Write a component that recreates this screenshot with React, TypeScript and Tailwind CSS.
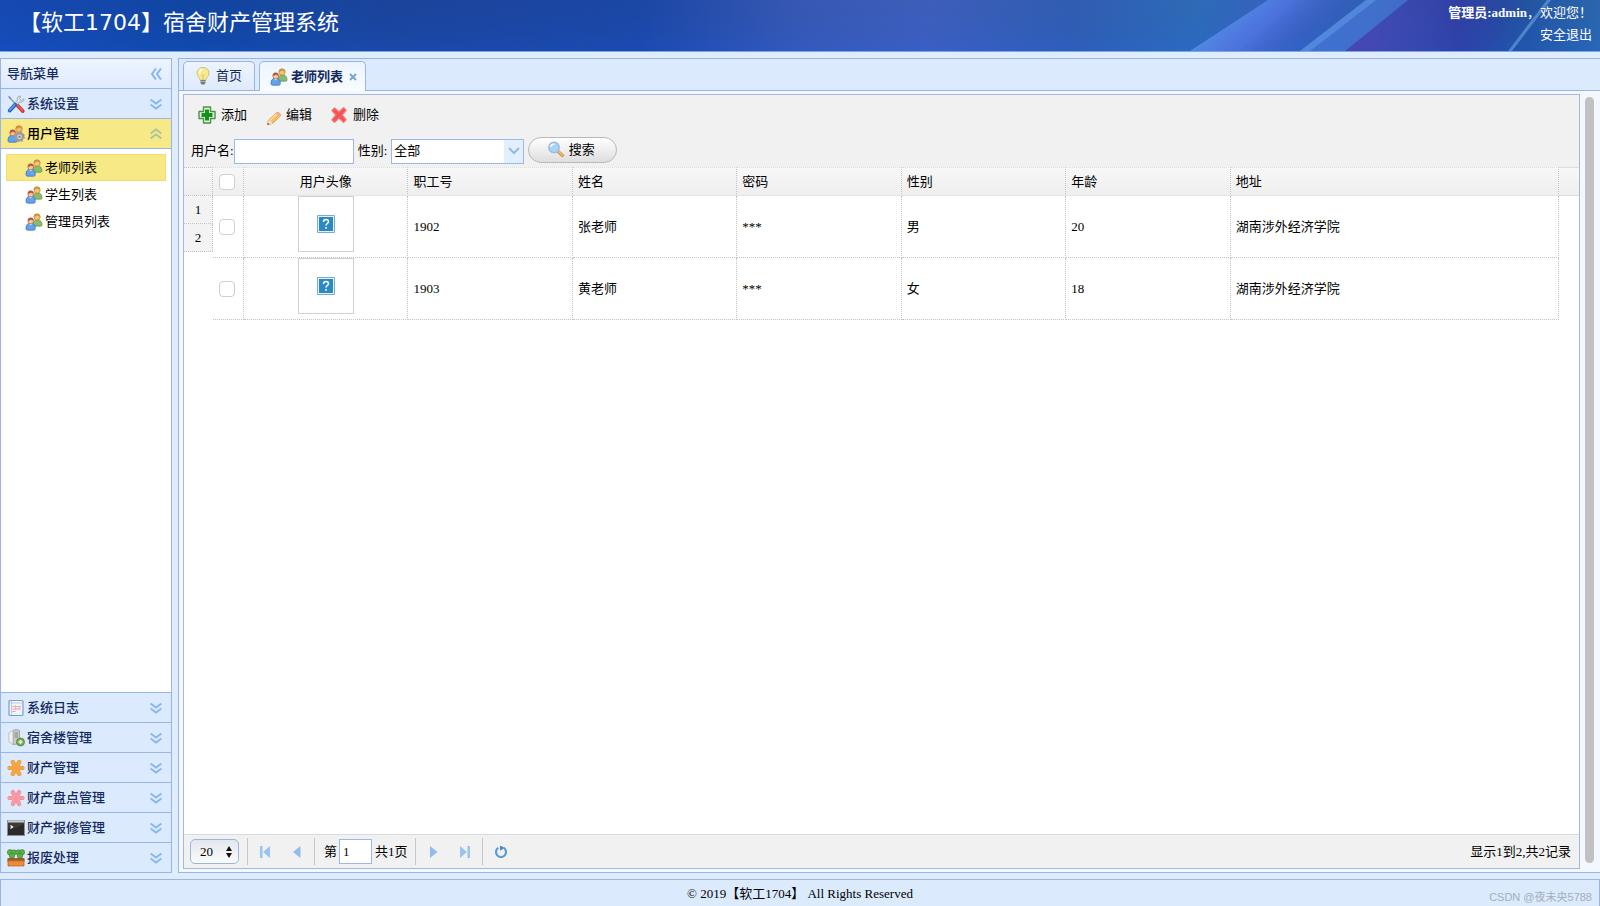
import type { ReactNode } from 'react';

const users = [
  { id: '1902', name: '张老师', gender: '男', age: 20, address: '湖南涉外经济学院' },
  { id: '1903', name: '黄老师', gender: '女', age: 18, address: '湖南涉外经济学院' },
];

function Svg({ children, className = 'size-[18px] shrink-0' }: { children: ReactNode; className?: string }) {
  return (
    <svg viewBox="0 0 18 18" className={className} fill="none" aria-hidden="true">
      {children}
    </svg>
  );
}

function UsersIcon() {
  return (
    <Svg>
      <path d="M8 12.500c0-4 1.500-5.500 4.500-5.500s4.500 1.500 4.500 5c0 .8-.4 1.200-1.200 1.200H9z" fill="#86bd6c" stroke="#5d964a" strokeWidth=".7" />
      <circle cx="12" cy="4" r="3.200" fill="#f3c578" stroke="#b98330" strokeWidth=".7" />
      <path d="M8.900 3.800c.2-2.200 1.500-3 3.100-3s3 1 3.100 3c-1.400-.2-2-.8-2.600-1.500-.8.900-2 1.400-3.600 1.500z" fill="#c8923c" />
      <path d="M1 15.500c0-3.800 1.700-5.300 4.600-5.300s4.700 1.500 4.700 5.300c0 1.200-.8 1.700-1.600 1.700H2.600c-1 0-1.600-.5-1.600-1.700z" fill="#63a3ee" stroke="#2f68bd" strokeWidth=".7" />
      <path d="M4 10.600l1.700 2 1.700-2z" fill="#e5f1ff" />
      <circle cx="5.700" cy="8" r="2.900" fill="#f6c7a0" stroke="#a65b38" strokeWidth=".6" />
      <path d="M2.800 7.800c0-2.300 1.200-3.200 2.900-3.200s3 1 2.900 3.200C7.300 7.600 6.600 7.200 6 6.500c-.7.800-1.800 1.200-3.200 1.300z" fill="#b15a3e" />
    </Svg>
  );
}

function UserGearIcon() {
  return (
    <Svg>
      <path d="M8 12c0-3.500 1.500-5 4.500-5s4.500 1.500 4.500 5z" fill="#d8a955" />
      <circle cx="12" cy="4" r="3.300" fill="#f5bd69" stroke="#c47e26" strokeWidth=".7" />
      <path d="M8.800 3.800c.2-2.200 1.500-3 3.200-3s3 1 3.200 3c-1.400-.2-2-.8-2.600-1.500-.8.900-2 1.400-3.800 1.500z" fill="#dc8b29" />
      <path d="M1 15.500c0-3.800 1.700-5.300 4.600-5.300s4.700 1.500 4.700 5.300c0 1.200-.8 1.700-1.600 1.700H2.600c-1 0-1.600-.5-1.600-1.700z" fill="#63a3ee" stroke="#2f68bd" strokeWidth=".7" />
      <circle cx="5.700" cy="8" r="2.900" fill="#f3bd91" stroke="#a65b38" strokeWidth=".6" />
      <path d="M2.800 7.800c0-2.300 1.200-3.200 2.900-3.200s3 1 2.900 3.200C7.300 7.600 6.600 7.200 6 6.500c-.7.800-1.800 1.200-3.200 1.300z" fill="#b15a3e" />
      <circle cx="12.500" cy="11.800" r="3.400" fill="#e5e5e2" stroke="#9c9c9a" strokeWidth="2.400" />
      <circle cx="12.500" cy="11.800" r="4.800" stroke="#9c9c9a" strokeWidth="1.400" strokeDasharray="1.880 1.890" />
      <circle cx="12.500" cy="11.800" r="1.300" fill="#888" />
    </Svg>
  );
}

function ToolsIcon() {
  return (
    <Svg>
      <path d="M2 2l8.500 9" stroke="#8da0b5" strokeWidth="1.500" />
      <path d="M1 .7l2.600 1.200.6 2-1.500.2z" fill="#7d8ea5" />
      <path d="M10.500 10.500l5.200 5.500" stroke="#c93a38" strokeWidth="3.800" strokeLinecap="round" />
      <path d="M10.800 10.500l4.600 5" stroke="#ef6358" strokeWidth="1.500" strokeLinecap="round" />
      <path d="M16.900 3.800l-2.500 1.700-1.800-1.500.9-3C10.800.8 9.500 3 10.400 5.300L7.200 8.800l2.200 2L12.600 7c2.500.7 4.700-.7 4.300-3.200z" fill="#dce2e8" stroke="#8996a4" strokeWidth=".7" />
      <path d="M8.200 9.700L2.800 15.500" stroke="#2f62ba" strokeWidth="3.900" strokeLinecap="round" />
      <path d="M7.500 9.900L2.800 15" stroke="#68a1e8" strokeWidth="1.500" strokeLinecap="round" />
    </Svg>
  );
}

function LogIcon() {
  return (
    <Svg>
      <rect x="2" y="1.500" width="14" height="15" rx="1" fill="#eff5fd" stroke="#7d9dcc" strokeWidth="1.200" />
      <path d="M4.500 2v14M3 4h12" stroke="#b8cce8" />
      <path d="M5.500 7.500h2.300M9.500 7.500H14M5.500 10h8M5.500 12.500h3" stroke="#ed9a9a" strokeWidth="1.200" />
      <path d="M8.500 6v5M12.500 7v4" stroke="#f2b4ae" />
    </Svg>
  );
}

function ServerIcon() {
  return (
    <Svg>
      <path d="M6 1.500c2-1 5-1 6.500 0v12c-2 1.500-4.500 2-6.500 2z" fill="#c8cac9" stroke="#949897" strokeWidth=".8" />
      <path d="M6 1.500L1.800 4v8.500L6 15.500z" fill="#f0f1ef" stroke="#b4b8b6" strokeWidth=".8" />
      <path d="M7.500 4h3.500M7.500 6h3.500M7.500 8h3.500" stroke="#818683" />
      <circle cx="13.500" cy="13" r="4" fill="#79ad54" stroke="#4f8139" strokeWidth=".8" />
      <path d="M11.500 13h4M13.500 11v4" stroke="#e9f7d6" strokeWidth="1.600" />
    </Svg>
  );
}

function GearIcon({ pink = false }: { pink?: boolean }) {
  const fill = pink ? '#fa9aa2' : '#f9a63e';
  const edge = pink ? '#f08791' : '#e8903a';
  return (
    <Svg>
      <g stroke={edge} strokeWidth="4.200" strokeLinecap="round">
        <path d="M2.500 9h13M5.800 3l6.400 12M12.200 3L5.800 15" />
      </g>
      <g stroke={fill} strokeWidth="3.200" strokeLinecap="round">
        <path d="M2.500 9h13M5.800 3l6.400 12M12.200 3L5.800 15" />
      </g>
      <circle cx="9" cy="9" r="4" fill={fill} />
    </Svg>
  );
}

function TerminalIcon() {
  return (
    <Svg>
      <rect x=".5" y="1.500" width="17" height="15" fill="#3a3a3a" stroke="#8d918f" />
      <path d="M1 2.500h16" stroke="#c9cdd0" strokeWidth="2" />
      <path d="M1 16V9c6 1 11-1 16-4v11z" fill="#2a2a2a" />
      <path d="M3.500 6.500l2 1.500-2 1.500" stroke="#fff" strokeWidth="1.300" />
    </Svg>
  );
}

function PlantIcon() {
  return (
    <Svg>
      <path d="M5 4v6M12.500 4v6" stroke="#3f8230" strokeWidth="1.500" />
      <g fill="#5faf48" stroke="#37812b" strokeWidth=".6">
        <circle cx="3" cy="3.300" r="2.700" />
        <circle cx="7" cy="3.300" r="2.500" />
        <circle cx="5" cy="6.800" r="2.700" />
        <circle cx="11.200" cy="3.300" r="2.500" />
        <circle cx="15" cy="3.300" r="2.700" />
        <circle cx="13" cy="6.800" r="2.700" />
      </g>
      <path d="M.8 9.500h16.400v3H.8z" fill="#a65b26" stroke="#7e4218" strokeWidth=".6" />
      <path d="M1 11.800h16V17H1z" fill="#e88c38" stroke="#b95d1c" strokeWidth=".7" />
    </Svg>
  );
}

function BulbIcon() {
  return (
    <Svg>
      <path d="M9 .5C5.300.5 3 2.900 3 6c0 3.200 2.800 4.200 3.200 7.200h5.600c.4-3 3.200-4 3.200-7.200C15 2.900 12.700.5 9 .5z" fill="#f5ec92" stroke="#c9bc74" strokeWidth=".9" />
      <path d="M5.500 6.300c0-2.100 1.200-3.500 2.800-3.700" stroke="#fffde4" strokeWidth="1.800" />
      <path d="M7.300 7.500L9 9.200l1.700-1.700M9 9.200V13" stroke="#d8b552" strokeWidth=".8" />
      <path d="M6.500 13h5v3l-1 1.500h-3l-1-1.500z" fill="#777a7f" />
      <path d="M6.500 14.500h5" stroke="#ccc" strokeWidth=".7" />
    </Svg>
  );
}

function AddIcon() {
  return (
    <Svg>
      <path d="M5.500 1h7v4.500H17v7h-4.500V17h-7v-4.500H1v-7h4.500z" fill="#e6f5e2" stroke="#4b9146" strokeWidth="1.400" strokeLinejoin="round" />
      <path d="M9 3.500v11M3.500 9h11" stroke="#14921b" strokeWidth="4" />
    </Svg>
  );
}

function PencilIcon() {
  return (
    <Svg>
      <path d="M2.300 16.800l1.200-4.600 8.300-7.500c1.300-1 4.800 1.500 3.600 3.300l-8 7.500z" fill="#f8bd60" stroke="#cf8b3a" strokeWidth=".8" />
      <path d="M3.500 12.200c2 .2 3.400 1.400 3.900 3.300l-5.100 1.300z" fill="#f8e2bd" />
      <path d="M2.300 16.800l.5-2 1.600 1.400z" fill="#4d4136" />
      <path d="M5 12l7.500-6.600" stroke="#ffe3a0" strokeWidth="1.300" />
      <path d="M11.800 4.700c1.300-1 4.800 1.500 3.600 3.300l-1.200 1.100c-.3-1.700-1.800-3.100-3.600-3.300z" fill="#f6ad8f" />
    </Svg>
  );
}

function DeleteIcon() {
  return (
    <Svg>
      <path d="M2 4.500L4.500 2 9 6l4.500-4.200L16 4.300 12 9l4 4.800-2.500 2.500L9 12l-4.500 4.300L2 13.800 6 9z" fill="#f45254" stroke="#f47472" strokeWidth="1.400" strokeLinejoin="round" />
    </Svg>
  );
}

function SearchIcon() {
  return (
    <Svg>
      <path d="M11 10.500l4.500 4" stroke="#d39a55" strokeWidth="3.200" strokeLinecap="round" />
      <path d="M11 10.200l4.500 3.800" stroke="#f3bd69" strokeWidth="1.300" strokeLinecap="round" />
      <circle cx="7" cy="6.500" r="5.200" fill="#a4d4f6" stroke="#9fbbd8" strokeWidth="1.500" />
      <path d="M3.500 6c.5-2 2-3 4-2.800" stroke="#f2fbff" strokeWidth="1.500" />
    </Svg>
  );
}

function Chevrons({ dir, className = 'text-[#85b9ec]' }: { dir: 'down' | 'up' | 'left'; className?: string }) {
  const paths = {
    down: 'M.5 1.500L6 5.500l5.500-4M.5 6.500L6 10.500l5.500-4',
    up: 'M.5 5.500L6 1.500l5.500 4M.5 10.500L6 6.500l5.500 4',
    left: 'M6 .5L2 6l4 5.500M11 .5L7 6l4 5.500',
  };
  return (
    <svg viewBox="0 0 12 12" className={`size-3 shrink-0 ${className}`} fill="none" aria-hidden="true">
      <path d={paths[dir]} stroke="currentColor" strokeWidth="2" />
    </svg>
  );
}

function Section({ icon, label, open = false }: { icon: ReactNode; label: string; open?: boolean }) {
  return (
    <button
      type="button"
      aria-expanded={open}
      className={`flex h-[30px] w-full shrink-0 items-center gap-[2px] border-b border-[#9ab5e4] pr-[9px] pl-[6px] text-left font-medium ${
        open ? 'bg-[#f8e987] text-black' : 'bg-[#dceafe] text-[#152a5c]'
      }`}
    >
      {icon}
      <span className="grow">{label}</span>
      <Chevrons dir={open ? 'up' : 'down'} className={open ? 'text-[#a9c5a0]' : 'text-[#85b9ec]'} />
    </button>
  );
}

function TreeItem({ label, selected = false }: { label: string; selected?: boolean }) {
  return (
    <li>
      <a
        href="#"
        className={`flex h-[27px] items-center gap-[2px] border pl-[18px] ${
          selected ? 'border-[#f3dc6a] bg-[#f8e987]' : 'border-transparent'
        }`}
      >
        <UsersIcon />
        {label}
      </a>
    </li>
  );
}

function HeaderArt() {
  return (
    <svg className="absolute inset-0 size-full" viewBox="0 0 1600 51" preserveAspectRatio="none" aria-hidden="true">
      <defs>
        <linearGradient id="sky">
          <stop offset="0" stopColor="#164cba" />
          <stop offset=".12" stopColor="#0f47a7" />
          <stop offset=".25" stopColor="#1c469f" />
          <stop offset=".4" stopColor="#1c49ab" />
          <stop offset=".5" stopColor="#3d5dbb" />
          <stop offset=".58" stopColor="#4564c4" />
          <stop offset=".67" stopColor="#3563b8" />
          <stop offset=".75" stopColor="#3273c0" />
          <stop offset=".8" stopColor="#3c68c8" />
          <stop offset=".86" stopColor="#3565bf" />
          <stop offset=".91" stopColor="#3040a5" />
          <stop offset=".95" stopColor="#2556a5" />
          <stop offset="1" stopColor="#2e6fb4" />
        </linearGradient>
        <linearGradient id="beam" gradientUnits="userSpaceOnUse" x1="1215" y1="10" x2="1275" y2="75">
          <stop offset="0" stopColor="#5590e6" />
          <stop offset=".5" stopColor="#4c72dc" />
          <stop offset="1" stopColor="#3a5cc0" stopOpacity="0" />
        </linearGradient>
        <linearGradient id="violet">
          <stop offset="0" stopColor="#4a46b4" />
          <stop offset="1" stopColor="#2c3ba2" stopOpacity="0" />
        </linearGradient>
        <linearGradient id="shade" x2="0" y2="1">
          <stop offset="0" stopColor="#173a80" stopOpacity=".15" />
          <stop offset="1" stopColor="#1550c8" stopOpacity=".25" />
        </linearGradient>
      </defs>
      <path d="M0 0h1600v51H0z" fill="url(#sky)" />
      <path d="M0 0h1600v51H0z" fill="url(#shade)" />
      <path d="M1190 51L1268 0h130l-90 51z" fill="url(#beam)" />
      <path d="M1345 51L1408 0h120l-40 51z" fill="url(#violet)" />
      <path d="M1300 51L1366 0h42l-63 51z" fill="#4a7ad6" opacity=".65" />
      <path d="M1300 51L1366 0h10l-66 51z" fill="#65a5ee" opacity=".45" />
      <path d="M1508 51L1547 0h4l-39 51z" fill="#6aa5dd" opacity=".6" />
    </svg>
  );
}

function Separator() {
  return <span className="h-[27px] border-l border-[#c6c6c6]" />;
}

function PagerButton({ label, children }: { label: string; children: ReactNode }) {
  return (
    <button type="button" aria-label={label} className="flex size-4 items-center justify-center">
      <svg viewBox="0 0 12 12" className="size-3" fill="none" aria-hidden="true">
        {children}
      </svg>
    </button>
  );
}

const checkbox = 'block size-4 appearance-none rounded-[4px] border border-[#cfcfcf] bg-white checked:bg-[#5b9be0]';
const dotted = 'border-dotted border-[#c4c4c4]';

function UserTable() {
  return (
    <div className="flex min-h-0 grow bg-white">
      <table className="w-[29px] shrink-0 table-fixed border-separate border-spacing-0 self-start bg-[#f3f3f3]">
        <thead>
          <tr className="h-[29px]">
            <th aria-label="序号" className={`border-t border-r border-b bg-linear-to-b from-[#f8f8f8] to-[#eeeeee] p-0 ${dotted}`} />
          </tr>
        </thead>
        <tbody>
          {users.map((user, i) => (
            <tr key={user.id} className="h-7">
              <td className={`border-r border-b p-0 text-center ${dotted}`}>{i + 1}</td>
            </tr>
          ))}
        </tbody>
      </table>
      <table className="w-full table-fixed border-separate border-spacing-0 self-start text-left">
        <colgroup>
          <col className="w-[31px]" />
          <col className="w-[12.04%]" />
          <col className="w-[12.04%]" />
          <col className="w-[12.04%]" />
          <col className="w-[12.04%]" />
          <col className="w-[12.04%]" />
          <col className="w-[12.04%]" />
          <col />
          <col className="w-5" />
        </colgroup>
        <thead>
          <tr className="h-[29px] bg-linear-to-b from-[#f8f8f8] to-[#eeeeee] [&>th]:border-t [&>th]:border-b [&>th]:border-t-[#dddddd] [&>th]:border-b-[#dddddd]">
            <th className={`border-r p-0 pl-[6px] ${dotted}`}>
              <input type="checkbox" aria-label="全选" className={checkbox} />
            </th>
            <th className={`border-r p-0 text-center font-normal ${dotted}`}>用户头像</th>
            {['职工号', '姓名', '密码', '性别', '年龄', '地址'].map((title) => (
              <th key={title} className={`border-r p-0 pl-[5px] font-normal ${dotted}`}>
                {title}
              </th>
            ))}
            <td className="border-t border-b border-[#dddddd]" />
          </tr>
        </thead>
        <tbody>
          {users.map((user) => (
            <tr key={user.id} className="h-[62px]">
              <td className={`border-r border-b p-0 pl-[6px] ${dotted}`}>
                <input type="checkbox" aria-label={`选择${user.name}`} className={checkbox} />
              </td>
              <td className={`border-r border-b p-0 align-top ${dotted}`}>
                <div className="mx-auto flex size-14 items-center justify-center border border-[#d0d0d0]">
                  <Svg>
                    <path d="M.5.500h17v17H.5z" fill="#e4f2fb" stroke="#79acd0" />
                    <path d="M2 2h14v14H2z" fill="#2d8ac0" />
                    <path d="M6.500 7c0-1.500 1-2.500 2.500-2.500s2.500.9 2.500 2.200C11.500 8.500 9 8.500 9 10.500M9 12v1.800" stroke="#fff" strokeWidth="1.500" />
                  </Svg>
                </div>
              </td>
              {[user.id, user.name, '***', user.gender, user.age, user.address].map((value, i) => (
                <td key={i} className={`border-r border-b p-0 pl-[5px] ${dotted}`}>
                  {value}
                </td>
              ))}
              <td />
            </tr>
          ))}
        </tbody>
      </table>
    </div>
  );
}

export default function App() {
  return (
    <div className="flex h-screen flex-col bg-[#dfecfb] font-['Liberation_Serif','Noto_Sans_CJK_SC',serif] text-[13px] leading-[18px] text-black">
      <header className="relative h-[52px] shrink-0 overflow-hidden border-b border-[#7ba5e4] bg-[#164cba]">
        <HeaderArt />
        <div className="relative flex items-start justify-between pr-2 pl-[19px] text-white">
          <h1 className="pt-[7px] font-['DejaVu_Sans','Noto_Sans_CJK_SC',sans-serif] text-[22px] leading-8">
            【软工1704】宿舍财产管理系统
          </h1>
          <div className="pt-[2px] text-right leading-[22px]">
            <p>
              <b>管理员:admin</b>，欢迎您！
            </p>
            <a href="#">安全退出</a>
          </div>
        </div>
      </header>

      <div className="flex min-h-0 grow gap-[6px] py-[6px]">
        <nav aria-label="导航菜单" className="flex w-[172px] shrink-0 flex-col border border-b-0 border-[#9ab5e4] bg-white">
          <div className="flex h-[30px] shrink-0 items-center justify-between border-b border-[#9ab5e4] bg-linear-to-b from-[#edf4ff] to-[#e0ebfd] pr-[9px] pl-[6px] font-medium text-[#152a5c]">
            导航菜单
            <button type="button" aria-label="折叠菜单">
              <Chevrons dir="left" />
            </button>
          </div>
          <Section icon={<ToolsIcon />} label="系统设置" />
          <Section icon={<UserGearIcon />} label="用户管理" open />
          <ul className="grow border-b border-[#9ab5e4] p-[5px]">
            <TreeItem label="老师列表" selected />
            <TreeItem label="学生列表" />
            <TreeItem label="管理员列表" />
          </ul>
          <Section icon={<LogIcon />} label="系统日志" />
          <Section icon={<ServerIcon />} label="宿舍楼管理" />
          <Section icon={<GearIcon />} label="财产管理" />
          <Section icon={<GearIcon pink />} label="财产盘点管理" />
          <Section icon={<TerminalIcon />} label="财产报修管理" />
          <Section icon={<PlantIcon />} label="报废处理" />
        </nav>

        <main className="flex min-w-0 grow flex-col border border-r-0 border-[#9ab5e4] bg-[#f2f8fe]">
          <div role="tablist" className="flex h-8 shrink-0 items-end gap-1 border-b border-[#9ab5e4] bg-[#dceafe] pl-1 text-[#152a5c]">
            <button
              type="button"
              role="tab"
              aria-selected="false"
              className="flex h-[29px] items-center gap-1 rounded-t-[5px] border border-b-0 border-[#9ab5e4] bg-linear-to-b from-[#edf4ff] to-[#dfeafc] pr-3 pl-[10px]"
            >
              <BulbIcon />
              首页
            </button>
            <div className="-mb-px flex h-[30px] items-center rounded-t-[5px] border border-b-0 border-[#9ab5e4] bg-linear-to-b from-[#edf4ff] to-[#f8fcff] pr-2 pl-[10px]">
              <button type="button" role="tab" aria-selected="true" className="flex items-center gap-[3px] font-bold">
                <UsersIcon />
                老师列表
              </button>
              <button type="button" aria-label="关闭老师列表" className="pl-[6px]">
                <svg viewBox="0 0 8 8" className="size-2" aria-hidden="true">
                  <path d="M1 1l6 6M7 1L1 7" stroke="#7aa2d0" strokeWidth="1.800" />
                </svg>
              </button>
            </div>
          </div>

          <div className="flex min-h-0 grow gap-[5px] py-[3px] pr-[6px] pl-1">
            <section className="flex min-w-0 grow flex-col border border-[#a5b9dc]">
              <div className="shrink-0 bg-[#f1f1f1] pt-[6px] pb-[2px]">
                <div className="flex h-7 items-center gap-[18px] pl-[14px]">
                  <button type="button" className="flex items-center gap-[5px]">
                    <AddIcon />
                    添加
                  </button>
                  <button type="button" className="flex items-center gap-[3px]">
                    <span className="pt-[4px]">
                      <PencilIcon />
                    </span>
                    编辑
                  </button>
                  <button type="button" className="flex items-center gap-[5px]">
                    <DeleteIcon />
                    删除
                  </button>
                </div>
                <form className="mt-2 flex h-7 items-center pl-[7px]" onSubmit={(e) => e.preventDefault()}>
                  <label htmlFor="username">用户名:</label>
                  <input id="username" className="h-[25px] w-[120px] border border-[#9bb9e6] bg-white px-1" />
                  <label htmlFor="gender" className="px-1">
                    性别:
                  </label>
                  <div className="relative">
                    <select id="gender" className="h-[25px] w-[133px] appearance-none border border-[#9bb9e6] bg-white px-[2px]">
                      <option>全部</option>
                      <option>男</option>
                      <option>女</option>
                    </select>
                    <span className="pointer-events-none absolute top-px right-px bottom-px flex w-[19px] items-center justify-center bg-[#e4effe]">
                      <svg viewBox="0 0 12 8" className="h-2 w-3" fill="none" aria-hidden="true">
                        <path d="M1 1l5 5 5-5" stroke="#8dbbea" strokeWidth="2" />
                      </svg>
                    </span>
                  </div>
                  <button
                    type="submit"
                    className="mb-[2px] ml-1 flex h-[26px] w-[89px] items-center justify-center gap-1 rounded-full border border-[#b9b9b9] bg-linear-to-b from-white to-[#dedede] pr-1"
                  >
                    <SearchIcon />
                    搜索
                  </button>
                </form>
              </div>

              <UserTable />

              <div className="flex h-[34px] shrink-0 items-center border-t border-[#d6dbe0] bg-[#f1f1f1] pr-2 pl-[6px]">
                <div className="relative mr-2">
                  <select
                    aria-label="每页记录数"
                    className="block h-[25px] w-[49px] appearance-none rounded-[5px] border border-[#9db5dc] bg-linear-to-b from-[#e3e7ed] to-[#fbfbfb] pl-[9px]"
                  >
                    <option>20</option>
                    <option>50</option>
                  </select>
                  <svg viewBox="0 0 8 12" className="pointer-events-none absolute top-[7px] right-[6px] h-3 w-2" aria-hidden="true">
                    <path d="M1 5l3-5 3 5zM1 7l3 5 3-5z" fill="#111" />
                  </svg>
                </div>
                <Separator />
                <div className="mx-[9px] flex gap-4">
                  <PagerButton label="第一页">
                    <path d="M1 0h2.500v12H1zM11 0v12L4 6z" fill="#99c4ef" />
                  </PagerButton>
                  <PagerButton label="上一页">
                    <path d="M9.500 0v12L2 6z" fill="#8ebdee" />
                  </PagerButton>
                </div>
                <Separator />
                <label htmlFor="page" className="pr-[2px] pl-[9px]">
                  第
                </label>
                <input id="page" defaultValue="1" className="h-[25px] w-[33px] border border-[#9bb9e6] bg-white px-[3px]" />
                <span className="pr-[7px] pl-[3px]">共1页</span>
                <Separator />
                <div className="mx-[9px] flex gap-4">
                  <PagerButton label="下一页">
                    <path d="M3 0v12l7.500-6z" fill="#8ebdee" />
                  </PagerButton>
                  <PagerButton label="最后一页">
                    <path d="M8.500 0H11v12H8.500zM1 0v12l7-6z" fill="#99c4ef" />
                  </PagerButton>
                </div>
                <Separator />
                <div className="ml-[10px]">
                  <PagerButton label="刷新">
                    <path d="M3.200 1.900a5 5 0 1 0 5.600 0" stroke="#5b9bd5" strokeWidth="2.100" />
                    <path d="M4.800-.5l4.700 2.300-4.300 2.900z" fill="#4385c5" />
                  </PagerButton>
                </div>
                <span className="ml-auto">显示1到2,共2记录</span>
              </div>
            </section>
            <div className="mt-[3px] mb-[6px] w-[9px] shrink-0 rounded-full bg-[#c1c1c1]" />
          </div>
        </main>
      </div>

      <footer className="relative flex h-[27px] shrink-0 items-center justify-center border border-b-0 border-[#9ab5e4] bg-[#dceafe] pt-px">
        © 2019【软工1704】 All Rights Reserved
        <span className="absolute right-[7px] bottom-0 font-['Liberation_Sans','Noto_Sans_CJK_SC',sans-serif] text-[11px] text-[#a4adbb]">
          CSDN @夜未央5788
        </span>
      </footer>
    </div>
  );
}
